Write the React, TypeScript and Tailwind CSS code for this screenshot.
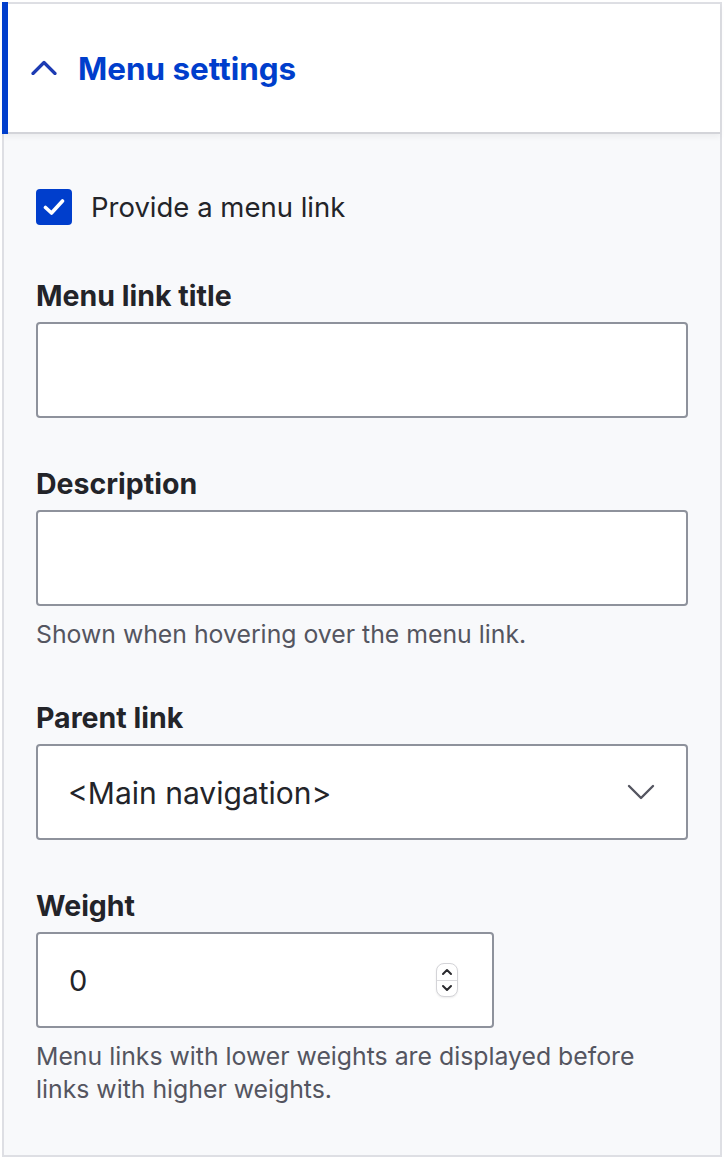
const Label = ({ children }: { children: React.ReactNode }) => (
  <label className="block text-[28.5px] leading-[36px] font-bold text-[#232429] mb-2">{children}</label>
);

const Help = ({ children }: { children: React.ReactNode }) => (
  <p className="mt-3 text-[24.8px] leading-[33px] text-[#545560] pr-10">{children}</p>
);

const TextInput = () => (
  <div className="h-[96px] w-full rounded-[4px] border-2 border-[#8e929c] bg-white" />
);

export default function App() {
  return (
    <div className="w-[724px] h-[1160px] bg-white pt-[2px] pl-[2px] font-['Inter',sans-serif]">
      <div className="relative w-[720px] border-2 border-[#dedfe4] bg-[#f8f9fb]">
        {/* summary */}
        <div className="relative flex h-[130px] items-center gap-[21px] border-b-2 border-[#d3d4d9] bg-white pl-[27px] shadow-[0_3px_6px_rgba(0,0,0,0.05)]">
          <span className="absolute -left-[2px] -top-[2px] h-[132px] w-[6px] bg-[#003ecc]" />
          <svg width="26" height="16" viewBox="0 0 26 16" fill="none" className="-mt-[2px]">
            <path d="M2 14.5 L13 3.5 L24 14.5" stroke="#1d3bb3" strokeWidth="3.2" strokeLinecap="round" strokeLinejoin="round" />
          </svg>
          <h2 className="mt-[2px] text-[31.4px] leading-[40px] font-bold text-[#003ecc]">Menu settings</h2>
        </div>

        {/* content */}
        <div className="px-8 pt-[55px] pb-[49px]">
          <div className="flex h-[36px] items-center gap-[19px]">
            <span className="flex h-[36px] w-[36px] items-center justify-center rounded-[4px] bg-[#003ecc]">
              <svg width="22" height="18" viewBox="0 0 22 18" fill="none">
                <path d="M2.5 9.5 L8.5 15 L19.5 3" stroke="#fff" strokeWidth="3.6" strokeLinecap="round" strokeLinejoin="round" />
              </svg>
            </span>
            <span className="text-[27.5px] leading-[36px] text-[#232429]">Provide a menu link</span>
          </div>

          <div className="mt-[53px]">
            <Label>Menu link title</Label>
            <TextInput />
          </div>

          <div className="mt-12">
            <Label>Description</Label>
            <TextInput />
            <Help>Shown when hovering over the menu link.</Help>
          </div>

          <div className="mt-[49px]">
            <Label>Parent link</Label>
            <div className="flex h-[96px] w-full items-center justify-between rounded-[4px] border-2 border-[#8e929c] bg-white pl-[30px] pr-[31px]">
              <span className="mt-[2px] text-[30px] text-[#232429]">&lt;Main navigation&gt;</span>
              <svg width="28" height="16" viewBox="0 0 28 16" fill="none">
                <path d="M2 2 L14 14 L26 2" stroke="#545560" strokeWidth="2.4" strokeLinecap="round" strokeLinejoin="round" />
              </svg>
            </div>
          </div>

          <div className="mt-12">
            <Label>Weight</Label>
            <div className="flex h-[96px] w-[458px] items-center justify-between rounded-[4px] border-2 border-[#8e929c] bg-white pl-[31px] pr-[34px]">
              <span className="mt-[2px] text-[29px] text-[#232429]">0</span>
              <div className="flex h-[34px] w-[22px] flex-col overflow-hidden rounded-[8px] border border-[#d4d4d8] bg-white shadow-[0_1px_2px_rgba(0,0,0,0.08)]">
                <div className="flex flex-1 items-center justify-center border-b border-[#dcdcdf]">
                  <svg width="12" height="8" viewBox="0 0 12 8" fill="none">
                    <path d="M2 6 L6 2 L10 6" stroke="#2a2a2e" strokeWidth="2" strokeLinecap="round" strokeLinejoin="round" />
                  </svg>
                </div>
                <div className="flex flex-1 items-center justify-center">
                  <svg width="12" height="8" viewBox="0 0 12 8" fill="none">
                    <path d="M2 2 L6 6 L10 2" stroke="#2a2a2e" strokeWidth="2" strokeLinecap="round" strokeLinejoin="round" />
                  </svg>
                </div>
              </div>
            </div>
            <Help>Menu links with lower weights are displayed before links with higher weights.</Help>
          </div>
        </div>
      </div>
    </div>
  );
}
